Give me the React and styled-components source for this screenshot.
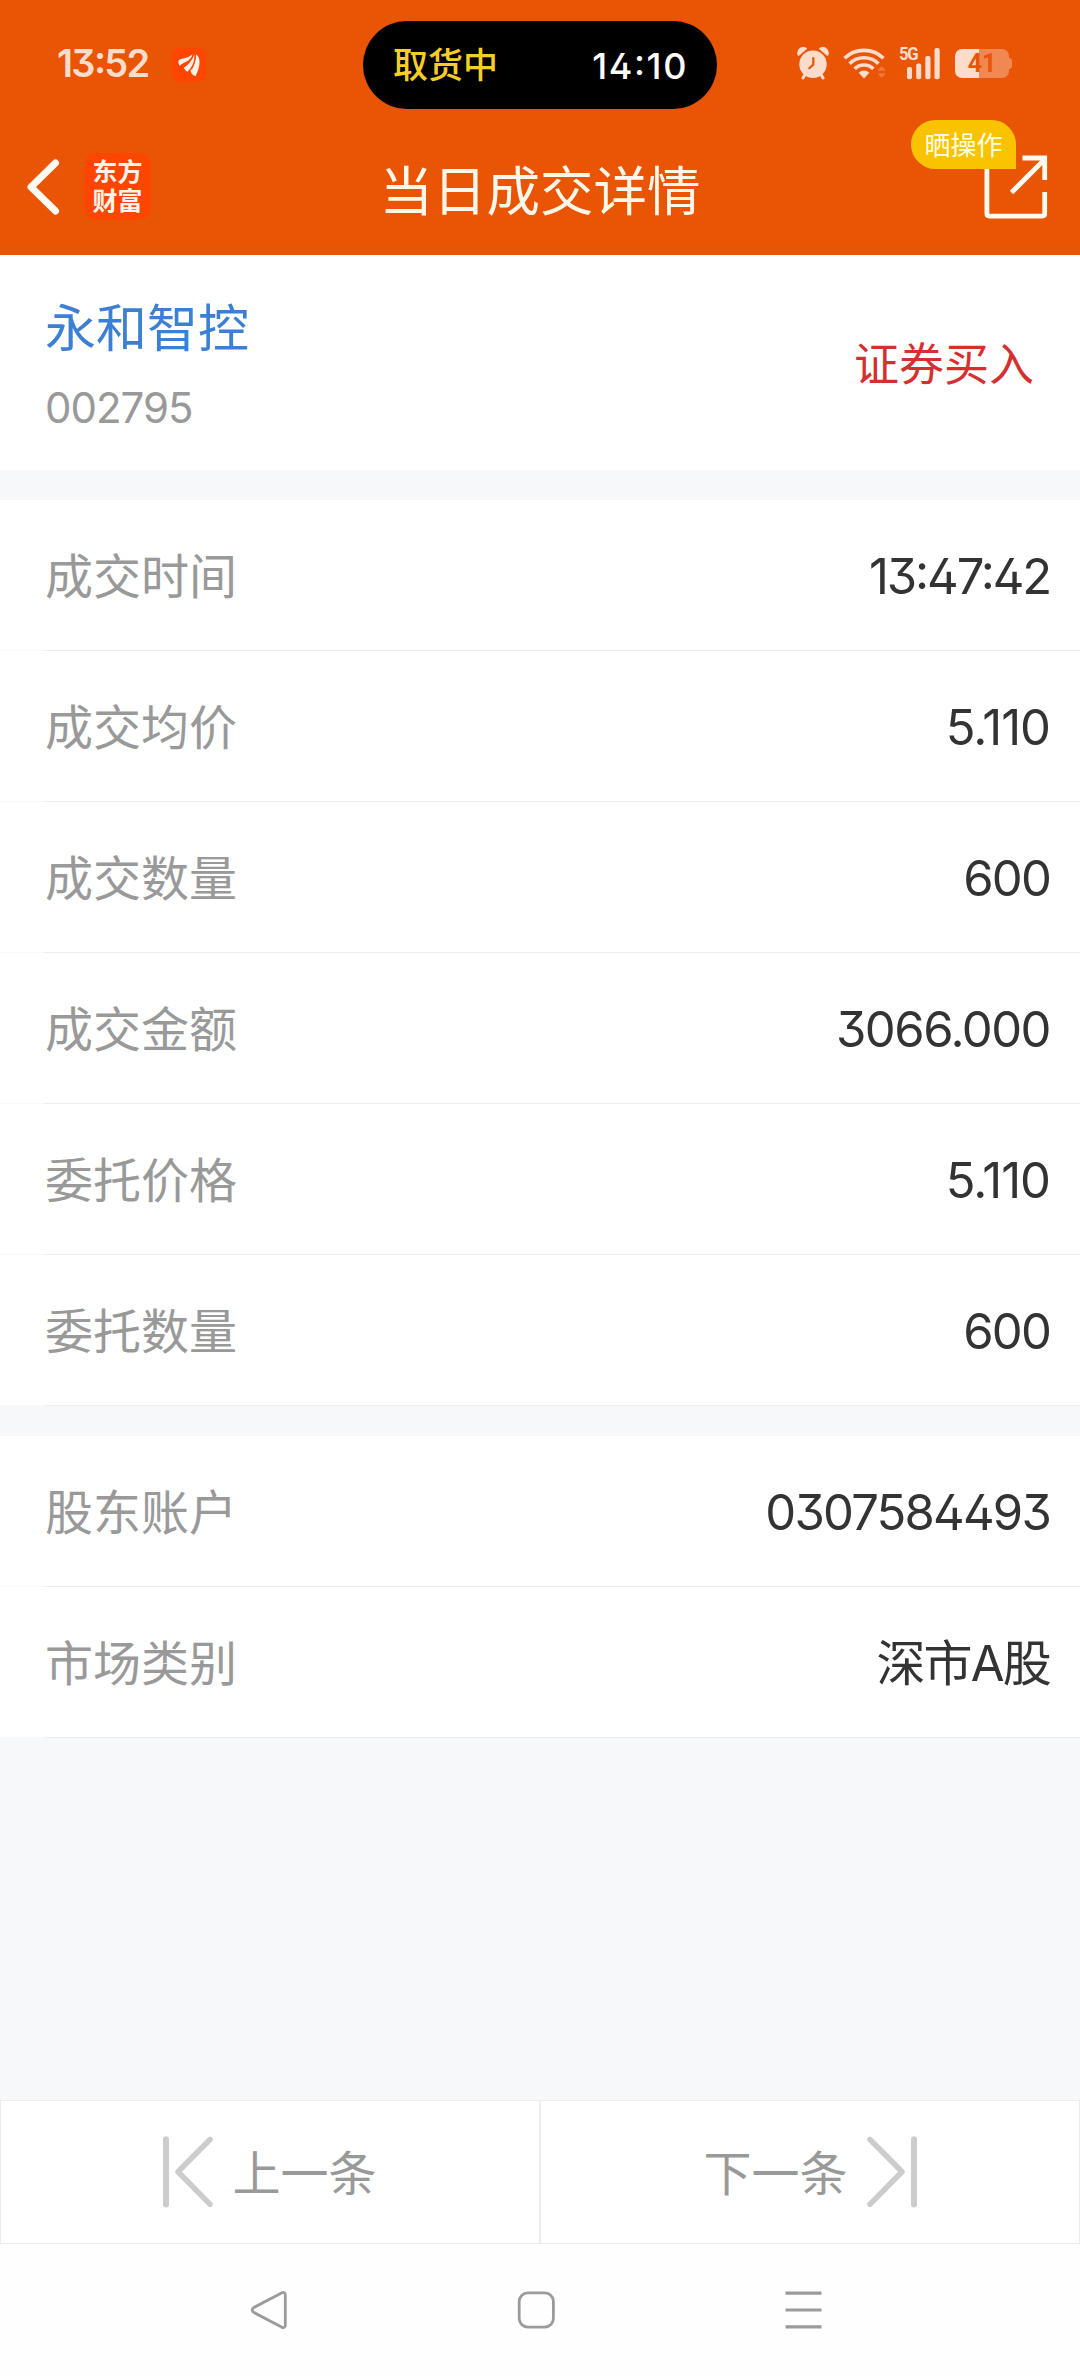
import { createGlobalStyle, styled } from "styled-components";

const dealRows = [
  { label: "成交时间", value: "13:47:42", spacing: -2.1 },
  { label: "成交均价", value: "5.110", spacing: -1 },
  { label: "成交数量", value: "600" },
  { label: "成交金额", value: "3066.000", spacing: -1.5 },
  { label: "委托价格", value: "5.110", spacing: -1 },
  { label: "委托数量", value: "600" },
];

const accountRows = [
  { label: "股东账户", value: "0307584493" },
  { label: "市场类别", value: "深市A股" },
];

function StatusBar() {
  return (
    <StatusArea>
      <StatusTime>13:52</StatusTime>
      <NoticeIcon>
        <svg width="34" height="34" viewBox="0 0 34 34" fill="#fff3ea">
          <path d="M6.5 15 C6 11.8 8 10.8 11.5 10.4 C15 9.8 18 8.5 20.5 6.3 C19.5 10.5 16 13.5 11.5 15 C9.8 15.8 8.5 17 7.5 17.8 Z" />
          <path d="M12 19.5 C16.5 17 20 12.5 22.3 6.2 C23 12.5 21 18 15.5 23.8 C13.5 22.8 12.3 21.2 12 19.5 Z" />
          <path d="M18.5 22.5 C21.8 18.5 23.8 13 24.2 6.2 C28.6 9.5 29 17.5 23.5 28.2 C20.5 27.5 18.8 25 18.5 22.5 Z" />
          <path d="M13.8 17.2 C17.5 14.5 20.3 10.5 21.8 6 M19.5 21.5 C22 17.5 23.5 12 23.6 6" fill="none" stroke="#ff4600" strokeWidth="0.9" />
        </svg>
      </NoticeIcon>
      <Island>
        <IslandState>取货中</IslandState>
        <IslandTime>14:10</IslandTime>
      </Island>
      <StatusIcons>
        <AlarmIcon />
        <WifiIcon />
        <SignalIcon />
        <Battery>
          <BatteryLevel>41</BatteryLevel>
        </Battery>
      </StatusIcons>
    </StatusArea>
  );
}

function AlarmIcon() {
  return (
    <svg width="32" height="33" viewBox="0 0 32 33">
      <g fill="#fddccb">
        <path d="M0.6 8 A6 6 0 0 1 9.6 1 Q10.4 1.6 9.6 2.3 L2.3 8.6 Q1.2 9.3 0.6 8 Z" />
        <path d="M31.4 8 A6 6 0 0 0 22.4 1 Q21.6 1.6 22.4 2.3 L29.7 8.6 Q30.8 9.3 31.4 8 Z" />
        <circle cx="16" cy="17.3" r="13.7" />
      </g>
      <path d="M8 27.5 L6 31 M24 27.5 L26 31" stroke="#fddccb" strokeWidth="3" strokeLinecap="round" />
      <path d="M16.3 11 V17.5 L12.3 21.3" fill="none" stroke="#e95504" strokeWidth="2.2" strokeLinecap="round" />
    </svg>
  );
}

function WifiIcon() {
  return (
    <svg width="44" height="33" viewBox="0 0 44 33">
      <g fill="none" stroke="#fddccb" strokeWidth="3.6">
        <path d="M1.5 11.3 A28 28 0 0 1 40.5 11.3" />
        <path d="M6.6 16.7 A20.5 20.5 0 0 1 35.4 16.7" />
        <path d="M11.6 21.8 A13.4 13.4 0 0 1 30.4 21.8" />
      </g>
      <path d="M21 31.5 L15.7 25.7 A7.6 7.6 0 0 1 26.3 25.7 Z" fill="#fddccb" />
      <path d="M34.5 23.7 L38.7 18.7 L42.9 23.7 Z M34.5 26.3 L38.7 31.3 L42.9 26.3 Z" fill="#ee7838" />
    </svg>
  );
}

function SignalIcon() {
  return (
    <SignalBox>
      <NetType>5G</NetType>
      <svg width="42" height="33" viewBox="0 0 42 33" fill="#fddccb">
        <rect x="8" y="20" width="5" height="12.3" rx="2" />
        <rect x="17.2" y="16.5" width="5" height="15.8" rx="2" />
        <rect x="26.3" y="9" width="5.2" height="23.3" rx="2" />
        <rect x="35.5" y="1" width="5.2" height="31.3" rx="2" />
      </svg>
    </SignalBox>
  );
}

function Header() {
  return (
    <HeaderArea>
      <HeaderSide>
        <svg width="36" height="60" viewBox="0 0 36 60">
          <path d="M31.5 6 L7 30 L31.5 54" fill="none" stroke="#fffaf3" strokeWidth="7" strokeLinecap="round" strokeLinejoin="round" />
        </svg>
        <BrandLogo>
          <span>东方</span>
          <span>财富</span>
        </BrandLogo>
      </HeaderSide>
      <HeaderTitle>当日成交详情</HeaderTitle>
      <ShareButton>
        <svg width="64" height="64" viewBox="0 0 64 64" fill="none" stroke="#fffaf0" strokeWidth="4.8">
          <path d="M2.9 2 V58.6 Q2.9 61.1 5.4 61.1 H58.2 Q60.7 61.1 60.7 58.6 V37" />
          <path d="M38.5 3 H60.7 V25" />
          <path d="M27.5 37.5 L60 5" />
        </svg>
        <ShareBadge>晒操作</ShareBadge>
      </ShareButton>
    </HeaderArea>
  );
}

function InfoGroup({ rows }) {
  return (
    <Group>
      {rows.map((row) => (
        <InfoRow key={row.label}>
          <RowLabel>{row.label}</RowLabel>
          <RowValue $spacing={row.spacing}>{row.value}</RowValue>
        </InfoRow>
      ))}
    </Group>
  );
}

function App() {
  return (
    <Page>
      <GlobalStyle />
      <StatusBar />
      <Header />
      <StockArea>
        <div>
          <StockName>永和智控</StockName>
          <StockCode>002795</StockCode>
        </div>
        <TradeType>证券买入</TradeType>
      </StockArea>
      <InfoGroup rows={dealRows} />
      <InfoGroup rows={accountRows} />
      <Pager>
        <PagerButton>
          <svg width="50" height="72" viewBox="0 0 50 72" fill="none" stroke="#ccc" strokeWidth="6" strokeLinecap="round" strokeLinejoin="round">
            <path d="M3 3.2 V68.5" />
            <path d="M47 3.5 L15 35.7 L47 68.3" strokeWidth="5.5" />
          </svg>
          <PagerText>上一条</PagerText>
        </PagerButton>
        <PagerButton>
          <PagerText>下一条</PagerText>
          <svg width="50" height="72" viewBox="0 0 50 72" fill="none" stroke="#ccc" strokeWidth="6" strokeLinecap="round" strokeLinejoin="round">
            <path d="M47 3.2 V68.5" />
            <path d="M3 3.5 L35 35.7 L3 68.3" strokeWidth="5.5" />
          </svg>
        </PagerButton>
      </Pager>
      <SystemNav>
        <svg width="38" height="38" viewBox="0 0 38 38">
          <path d="M31.5 1.9 Q35.3 0.3 35.3 4 V34 Q35.3 37.7 31.5 36.1 L4 21.6 Q0.3 19 4 16.4 Z" />
        </svg>
        <svg width="38" height="38" viewBox="0 0 38 38">
          <rect x="2.2" y="1.9" width="34.2" height="34.2" rx="8.5" />
        </svg>
        <svg width="38" height="38" viewBox="0 0 38 38">
          <path d="M1.5 2.2 H37.5 M1.5 19 H37.5 M1.5 35.8 H37.5" strokeWidth="3.2" />
        </svg>
      </SystemNav>
    </Page>
  );
}

export default App;

/* CSS Area */
const GlobalStyle = createGlobalStyle`
  * {
    box-sizing: border-box;
  }

  body {
    margin: 0;
    font-family: Inter, "Noto Sans CJK SC", sans-serif;
    font-feature-settings: "cv09", "cv02", "calt";
  }

  svg {
    display: block;
    flex: none;
  }
`;

const Page = styled.div`
  display: flex;
  flex-direction: column;
  width: 1080px;
  height: 2376px;
  overflow: hidden;
  background: #f7f8fa;
`;

const StatusArea = styled.div`
  display: grid;
  grid-template-columns: 172px 191px 354px 1fr;
  align-items: center;
  height: 130px;
  background: #e95504;
`;

const StatusTime = styled.span`
  padding: 0 0 5px 57px;
  font-size: 38px;
  font-weight: 600;
  line-height: 40px;
  letter-spacing: -1.7px;
  color: #fddccb;
`;

const NoticeIcon = styled.span`
  width: 34px;
  height: 34px;
  border-radius: 8px;
  background: #ff4600;
`;

const Island = styled.div`
  display: flex;
  align-items: center;
  justify-content: space-between;
  height: 88px;
  padding: 0 29px 0 30px;
  border-radius: 44px;
  background: #000;
`;

const IslandState = styled.span`
  font-size: 35px;
  font-weight: 500;
  line-height: 44px;
  color: #f5cf27;
`;

const IslandTime = styled.span`
  padding-top: 1px;
  font-size: 36px;
  font-weight: 500;
  line-height: 44px;
  letter-spacing: 1.6px;
  color: #fff;
`;

const StatusIcons = styled.div`
  display: flex;
  align-items: center;
  gap: 14px;
  padding: 0 0 3px 80px;
`;

const SignalBox = styled.span`
  position: relative;
  margin: 0 0 0 -2px;
`;

const NetType = styled.span`
  position: absolute;
  top: -3px;
  left: 0;
  font-family: Roboto, sans-serif;
  font-size: 19px;
  font-weight: 700;
  line-height: 20px;
  letter-spacing: -1.5px;
  transform: scaleX(0.88);
  transform-origin: left;
  color: #fddccb;
`;

const Battery = styled.span`
  position: relative;
  width: 54px;
  height: 29px;
  border-radius: 7px;
  background: linear-gradient(90deg, #fddccb 24px, #f28851 24px);

  &::after {
    content: "";
    position: absolute;
    top: 9px;
    right: -3px;
    width: 3px;
    height: 11px;
    border-radius: 0 3px 3px 0;
    background: #f28851;
  }
`;

const BatteryLevel = styled.span`
  display: block;
  font-family: Roboto, sans-serif;
  font-size: 25px;
  font-weight: 700;
  line-height: 30px;
  text-align: center;
  color: #e95504;
`;

const HeaderArea = styled.header`
  display: grid;
  grid-template-columns: 1fr auto 1fr;
  align-items: start;
  height: 125px;
  background: #e95504;
`;

const HeaderSide = styled.div`
  display: flex;
  align-items: center;
  gap: 24px;
  padding: 23px 0 0 24px;
`;

const BrandLogo = styled.span`
  display: flex;
  flex-direction: column;
  align-items: center;
  width: 67px;
  height: 67px;
  padding-top: 5px;
  border-radius: 13px;
  background: #ff4600;
  font-size: 25px;
  font-weight: 700;
  line-height: 29px;
  color: #fff3ea;
`;

const HeaderTitle = styled.h1`
  margin: 32px 0 0;
  font-size: 53.5px;
  font-weight: 400;
  line-height: 60px;
  color: #fff8ea;
`;

const ShareButton = styled.div`
  position: relative;
  justify-self: end;
  margin: 25px 32px 0 0;
`;

const ShareBadge = styled.span`
  position: absolute;
  top: -35px;
  right: 32px;
  width: 105px;
  height: 49px;
  border-radius: 25px 25px 0 25px;
  background: #f9c300;
  font-size: 26px;
  line-height: 51px;
  text-align: center;
  color: #ffffe6;
`;

const StockArea = styled.section`
  display: flex;
  align-items: center;
  justify-content: space-between;
  height: 215px;
  padding: 4px 46px 0 45px;
  background: #fff;
`;

const StockName = styled.div`
  padding-top: 5px;
  font-size: 51px;
  line-height: 60px;
  color: #3d7fd3;
`;

const StockCode = styled.div`
  margin-top: 21px;
  font-size: 42px;
  line-height: 56px;
  letter-spacing: -1px;
  color: #999;
`;

const TradeType = styled.div`
  font-size: 45px;
  line-height: 54px;
  color: #d3302f;
`;

const Group = styled.section`
  margin-top: 30px;
`;

const InfoRow = styled.div`
  display: flex;
  align-items: center;
  justify-content: space-between;
  height: 151px;
  padding: 2px 30px 0 45px;
  background:
    linear-gradient(#ededed, #ededed) 45px 150px / 1035px 1px no-repeat,
    linear-gradient(#fff, #fff) 0 0 / 100% 150px no-repeat;
`;

const RowLabel = styled.span`
  font-size: 48px;
  line-height: 60px;
  color: #999;
`;

const RowValue = styled.span`
  font-size: 49px;
  font-weight: 370;
  line-height: 60px;
  letter-spacing: ${({ $spacing = -1.8 }) => $spacing}px;
  color: #333;
`;

const Pager = styled.div`
  display: grid;
  grid-template-columns: 1fr 1fr;
  height: 144px;
  margin-top: auto;
`;

const PagerButton = styled.div`
  display: flex;
  align-items: center;
  justify-content: center;
  gap: 19px;
  border: 1px solid #ededed;
  background: #fff;
`;

const PagerText = styled.span`
  padding-top: 3px;
  font-size: 48px;
  line-height: 60px;
  color: #999;
`;

const SystemNav = styled.nav`
  display: flex;
  justify-content: center;
  gap: 229px;
  height: 132px;
  padding: 47px 8px 0 0;
  background: #fefefe;
  fill: none;
  stroke: #9b9b9b;
  stroke-width: 2.8px;
`;
